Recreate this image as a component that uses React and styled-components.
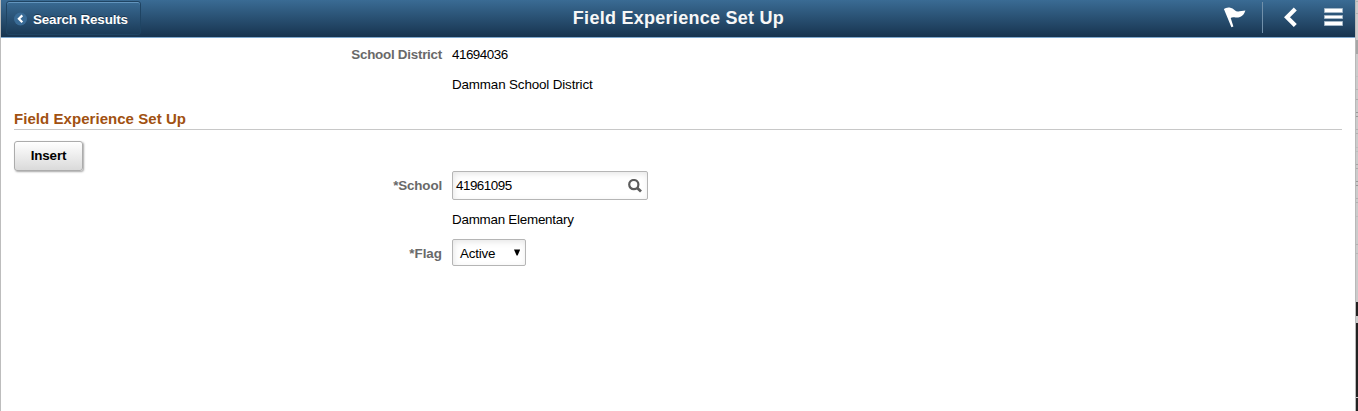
import React from "react";
import styled, { createGlobalStyle } from "styled-components";

const GlobalStyle = createGlobalStyle`
  * { box-sizing: border-box; }
  body {
    margin: 0;
    overflow: hidden;
    background: #fff;
    font: 13.4px/16px "Liberation Sans", Arial, sans-serif;
    color: #000;
  }
`;

const Window = styled.div`
  display: flex;
  width: 1358px;
  height: 411px;
`;

const Page = styled.div`
  flex: 1;
  border-left: 1px solid #bdbdbd;
`;

const Header = styled.header`
  display: grid;
  grid-template-columns: 400px 1fr 404px;
  height: 38px;
  padding-left: 5px;
  background: linear-gradient(#3a6b94, #17344f);
  border-bottom: 1px solid #7fa9cf;
`;

const BackButton = styled.button`
  display: flex;
  align-items: center;
  width: 135px;
  height: 34px;
  margin-top: 1px;
  padding: 2px 0 0 7px;
  border: 1px solid #1f4463;
  border-radius: 3px;
  background: linear-gradient(#396a93, #1b3b58);
  box-shadow: inset 0 1px 0 #6294bd;
  color: #fff;
  font: bold 13.4px/16px "Liberation Sans", Arial, sans-serif;
  letter-spacing: -0.13px;
  text-shadow: 0 -1px 0 rgba(0, 0, 0, 0.4);

  svg { margin-right: 5px; }
  span { padding-top: 2px; }
`;

const Title = styled.h1`
  margin: 0;
  font-size: 18px;
  line-height: 36px;
  letter-spacing: 0.27px;
  text-align: center;
  color: #f7f7f7;
`;

const Actions = styled.div`
  display: flex;
  justify-content: flex-end;
`;

const Divider = styled.span`
  width: 1px;
  height: 31px;
  margin: 2px 20px 0 15px;
  background: #7190aa;
`;

const Field = styled.div`
  display: flex;
  align-items: center;
  height: ${(p) => p.$height}px;
  margin-top: ${(p) => p.$gap || 0}px;
`;

const Label = styled.label`
  width: 441px;
  margin-right: 10px;
  padding-top: ${(p) => p.$drop || 0}px;
  font-weight: bold;
  text-align: right;
  color: #696969;
  letter-spacing: ${(p) => p.$spacing || 0}px;
`;

const Value = styled.span`
  letter-spacing: ${(p) => p.$spacing || 0}px;
`;

const SectionTitle = styled.h2`
  height: 20px;
  margin: 17px 13px 0;
  border-bottom: 1px solid #c8c8c8;
  font-size: 15px;
  line-height: 17px;
  letter-spacing: 0.05px;
  color: #a15111;
`;

const InsertButton = styled.button`
  display: block;
  width: 69px;
  height: 30px;
  margin: 11px 0 0 13px;
  padding: 0 0 1px;
  border: 1px solid #acacac;
  border-radius: 3px;
  background: linear-gradient(#fff, #dadada);
  box-shadow: 1px 1px 2px rgba(0, 0, 0, 0.35);
  color: #000;
  font: bold 13.4px/16px "Liberation Sans", Arial, sans-serif;
  letter-spacing: -0.15px;
`;

const Control = styled.div`
  display: flex;
  align-items: center;
  justify-content: space-between;
  width: ${(p) => p.$width}px;
  height: 100%;
  padding: ${(p) => p.$padding};
  border: 1px solid #b5b5b5;
  border-radius: 2px;
  box-shadow: inset 1px 2px 6px rgba(0, 0, 0, 0.1);
`;

const Gutter = styled.aside`
  display: flex;
  flex-direction: column;
  width: 3px;
  border-left: 1px solid #b9b9b9;
  background: #cbcbcb;
`;

const GutterBlock = styled.span`
  flex: none;
  height: ${(p) => p.$height}px;
  margin-top: ${(p) => p.$gap}px;
  background: ${(p) => p.$color};
`;

const blocks = [
  [1, 1, "#b2b2b2"], [11, 1, "#b2b2b2"], [26, 14, "#a6a6a6"], [22, 1, "#c2c2c2"],
  [12, 1, "#b5b5b5"], [9, 1, "#acacac"], [12, 1, "#999"], [3, 1, "#999"],
  [12, 1, "#b2b2b2"], [3, 1, "#b2b2b2"], [13, 1, "#bebebe"], [3, 1, "#bebebe"],
  [12, 1, "#a6a6a6"], [3, 1, "#acacac"], [12, 1, "#999"], [3, 1, "#999"],
  [12, 1, "#b2b2b2"], [3, 1, "#b2b2b2"], [13, 1, "#bebebe"], [27, 1, "#b2b2b2"],
  [8, 1, "#b8b8b8"], [48, 14, "#222"], [7, 74, "#222"], [1, 13, "#222"],
];

export default function App() {
  return (
    <Window>
      <GlobalStyle />
      <Page>
        <Header>
          <BackButton>
            <svg width="14" height="14" viewBox="0 0 14 14">
              <circle cx="6.5" cy="7" r="6.5" fill="#396b96" />
              <path d="M8.3 3.4L4.9 6.8l3.4 3.4" fill="none" stroke="#fff" strokeWidth="2.2" />
            </svg>
            <span>Search Results</span>
          </BackButton>
          <Title>Field Experience Set Up</Title>
          <Actions>
            <svg width="24" height="37" viewBox="0 0 24 37" fill="#fff">
              <path d="M.9 9Q3 7.2 6.5 7.5Q10 8.2 11.8 10.3Q13.5 12 16.5 11.3L22.4 10.6Q20.8 15.7 17 17Q14 17.9 11.5 17.3Q9 16.8 7.7 18L10.4 26.4L8.4 27.2Z" />
            </svg>
            <Divider />
            <svg width="15" height="37" viewBox="0 0 15 37">
              <path d="M12.3 9L4 17.3l8.3 8.3" fill="none" stroke="#fff" strokeWidth="4.2" />
            </svg>
            <svg width="57" height="37" viewBox="0 0 57 37" fill="#fff" stroke="#a4b7c7">
              <path d="M26.5 8.5h18v4h-18zM26.5 15.5h18v3h-18zM26.5 21.5h18v4h-18z" />
            </svg>
          </Actions>
        </Header>
        <main>
          <Field $height={16} $gap={9}>
            <Label $spacing={-0.25}>School District</Label>
            <Value $spacing={-0.5}>41694036</Value>
          </Field>
          <Field $height={16} $gap={14}>
            <Label />
            <Value $spacing={-0.14}>Damman School District</Value>
          </Field>
          <SectionTitle>Field Experience Set Up</SectionTitle>
          <InsertButton>Insert</InsertButton>
          <Field $height={29}>
            <Label $spacing={-0.15}>*School</Label>
            <Control $width={196} $padding="0 5px 0 3px">
              <Value $spacing={-0.5}>41961095</Value>
              <svg width="14" height="14" viewBox="0 0 14 14" fill="none" stroke="#5c5c5c">
                <circle cx="5.8" cy="5.6" r="4.6" strokeWidth="2.2" />
                <path d="M9 8.8l4 3.8" strokeWidth="2.8" />
              </svg>
            </Control>
          </Field>
          <Field $height={16} $gap={12}>
            <Label />
            <Value $spacing={-0.24}>Damman Elementary</Value>
          </Field>
          <Field $height={27} $gap={11}>
            <Label $drop={2}>*Flag</Label>
            <Control $width={74} $padding="2px 5px 0 7px">
              <Value $spacing={-0.2}>Active</Value>
              <svg width="6" height="12" viewBox="0 0 6 12">
                <path d="M0 1.5h6.2L3.6 7.5h-1z" />
              </svg>
            </Control>
          </Field>
        </main>
      </Page>
      <Gutter>
        {blocks.map(([gap, height, color], i) => (
          <GutterBlock key={i} $gap={gap} $height={height} $color={color} />
        ))}
      </Gutter>
    </Window>
  );
}
